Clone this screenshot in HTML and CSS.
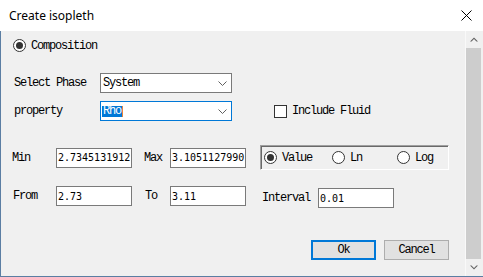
FILE: index.html
```html
<!DOCTYPE html>
<html lang="en">
<head>
    <meta charset="UTF-8">
    <meta name="viewport" content="width=device-width, initial-scale=1.0">
    <title>Create isopleth</title>
    <link rel="stylesheet" href="styles.css">
</head>
<body>
<div class="window">
    <div class="titlebar">
        <span class="title">Create isopleth</span>
        <svg class="close" width="11" height="11" viewBox="0 0 11 11">
            <path d="M0.5 0.5L10.5 10.5M10.5 0.5L0.5 10.5" stroke="#000" stroke-width="1" fill="none"/>
        </svg>
    </div>

    <div class="frame">
        <div class="client">
            <!-- Composition -->
            <div class="row row-comp">
                <span class="radio checked"></span>
                <span class="opt-label">Composition</span>
            </div>

            <!-- Fase -->
            <div class="row row-phase">
                <span class="label-col">Select Phase</span>
                <div class="combo">
                    <span>System</span>
                    <svg class="chevron" width="9" height="5" viewBox="0 0 9 5">
                        <path d="M0.5 0.5L4.5 4.5L8.5 0.5" stroke="#606060" fill="none"/>
                    </svg>
                </div>
            </div>

            <!-- Propriedade -->
            <div class="row row-prop">
                <span class="label-col">property</span>
                <div class="combo focused">
                    <span class="selected-text">Rho</span>
                    <svg class="chevron" width="9" height="5" viewBox="0 0 9 5">
                        <path d="M0.5 0.5L4.5 4.5L8.5 0.5" stroke="#606060" fill="none"/>
                    </svg>
                </div>
                <span class="checkbox"></span>
                <span class="opt-label">Include Fluid</span>
            </div>

            <!-- Min / Max -->
            <div class="row row-min">
                <span class="lbl-a">Min</span>
                <input class="field" type="text" value="2.7345131912">
                <span class="lbl-b">Max</span>
                <input class="field" type="text" value="3.1051127990">
                <div class="scale-group">
                    <div class="opt opt-value">
                        <span class="radio checked"></span>
                        <span class="opt-label">Value</span>
                    </div>
                    <div class="opt opt-ln">
                        <span class="radio"></span>
                        <span class="opt-label">Ln</span>
                    </div>
                    <div class="opt">
                        <span class="radio"></span>
                        <span class="opt-label">Log</span>
                    </div>
                </div>
            </div>

            <!-- From / To / Interval -->
            <div class="row row-from">
                <span class="lbl-a lbl-from">From</span>
                <input class="field" type="text" value="2.73">
                <span class="lbl-b lbl-to">To</span>
                <input class="field" type="text" value="3.11">
                <div class="interval">
                    <span class="lbl-interval">Interval</span>
                    <input class="field" type="text" value="0.01">
                </div>
            </div>

            <div class="actions">
                <button class="btn btn-ok">Ok</button>
                <button class="btn">Cancel</button>
            </div>
        </div>

        <div class="scrollbar">
            <div class="sb-btn">
                <svg width="8" height="5" viewBox="0 0 8 5">
                    <path d="M0 4.5L4 0.5L8 4.5L6.5 4.5L4 2L1.5 4.5Z" fill="#606060"/>
                </svg>
            </div>
            <div class="sb-thumb"></div>
            <div class="sb-btn">
                <svg width="8" height="5" viewBox="0 0 8 5">
                    <path d="M0 0.5L4 4.5L8 0.5L6.5 0.5L4 3L1.5 0.5Z" fill="#606060"/>
                </svg>
            </div>
        </div>
    </div>
</div>
</body>
</html>
```

FILE: styles.css
```css
body {
    margin: 0;
    background-color: #fff;
    font-family: 'Liberation Mono', 'DejaVu Sans Mono', monospace;
    font-size: 12px;
    letter-spacing: -1.2px;
    color: #000;
}
.window {
    width: 483px;
    height: 277px;
    display: flex;
    flex-direction: column;
    overflow: hidden;
}
.titlebar {
    height: 31px;
    flex: none;
    display: flex;
    align-items: center;
    justify-content: space-between;
    padding: 0 11px 0 9px;
    box-sizing: border-box;
    background-color: #fff;
}
.title {
    font-family: 'Noto Sans', sans-serif;
    font-size: 12px;
    letter-spacing: 0;
}
.close {
    display: block;
}
.frame {
    flex: 1;
    display: flex;
    border-bottom: 1px solid #5b7ea3;
}
.client {
    flex: 1;
    background-color: #f0f0f0;
    border-left: 1px solid #5b7ea3;
    padding-top: 8px;
}
.row {
    display: flex;
    align-items: center;
}
.row-comp {
    height: 13px;
    padding-left: 12px;
}
.row-phase {
    margin-top: 21px;
    padding-left: 13px;
}
.row-prop {
    margin-top: 8px;
    padding-left: 13px;
}
.label-col {
    width: 86px;
}
.combo {
    width: 132px;
    height: 20px;
    box-sizing: border-box;
    border: 1px solid #7a7a7a;
    background-color: #fff;
    display: flex;
    align-items: center;
    justify-content: space-between;
    padding: 0 4px 0 2px;
}
.combo.focused {
    border-color: #0078d7;
    padding-left: 1px;
}
.selected-text {
    background-color: #0078d7;
    color: #fff;
    line-height: 11px;
    height: 11px;
    padding: 0 1px 0 1px;
    border-right: 1px solid #e8833a;
}
.chevron {
    display: block;
}
.row-prop .checkbox {
    margin-left: 42px;
}
.checkbox {
    width: 13px;
    height: 13px;
    box-sizing: border-box;
    border: 1px solid #333;
    background-color: #fff;
    flex: none;
}
.radio {
    width: 13px;
    height: 13px;
    box-sizing: border-box;
    border: 1px solid #333;
    border-radius: 50%;
    background-color: #fff;
    flex: none;
    display: flex;
    align-items: center;
    justify-content: center;
}
.radio.checked::after {
    content: '';
    width: 7px;
    height: 7px;
    border-radius: 50%;
    background-color: #333;
}
.opt-label {
    margin-left: 5px;
}
.row-min {
    margin-top: 24px;
    height: 25px;
    padding-left: 11px;
}
.lbl-a {
    width: 44px;
}
.lbl-from {
    width: 43px;
    margin-left: 1px;
}
.lbl-b {
    width: 38px;
    padding-left: 12px;
    box-sizing: border-box;
}
.lbl-to {
    padding-left: 13px;
}
.field {
    width: 76px;
    height: 20px;
    box-sizing: border-box;
    border: 1px solid #7a7a7a;
    background-color: #fff;
    padding: 0 0 0 1px;
    margin: 0;
    font-family: 'DejaVu Sans Mono', monospace;
    font-size: 10px;
    letter-spacing: 0;
    color: #000;
    outline: none;
}
.scale-group {
    margin-left: 14px;
    width: 189px;
    height: 25px;
    box-sizing: border-box;
    border-top: 1px solid #a0a0a0;
    border-left: 1px solid #a0a0a0;
    border-bottom: 1px solid #fff;
    border-right: 1px solid #fff;
    box-shadow: inset 1px 1px 0 #696969;
    display: flex;
    align-items: center;
    padding-left: 3px;
}
.opt {
    display: flex;
    align-items: center;
}
.opt-value {
    width: 68px;
}
.opt-ln {
    width: 65px;
}
.row-from {
    margin-top: 16px;
    padding-left: 11px;
    align-items: flex-start;
}
.row-from > span {
    height: 20px;
    display: flex;
    align-items: center;
}
.interval {
    display: flex;
    align-items: center;
    margin-left: 16px;
    margin-top: 2px;
}
.lbl-interval {
    width: 56px;
}
.actions {
    display: flex;
    justify-content: flex-end;
    gap: 8px;
    margin-top: 32px;
    padding-right: 16px;
}
.btn {
    width: 65px;
    height: 20px;
    box-sizing: border-box;
    border: 1px solid #adadad;
    background-color: #e1e1e1;
    font-family: 'Liberation Mono', monospace;
    font-size: 12px;
    letter-spacing: -1.2px;
    color: #000;
    padding: 0;
}
.btn-ok {
    border: 2px solid #0078d7;
}
.scrollbar {
    width: 18px;
    flex: none;
    display: flex;
    flex-direction: column;
    box-sizing: border-box;
    border-left: 1px solid #f9f9f9;
    padding-right: 2px;
    background-color: #f0f0f0;
}
.sb-btn {
    height: 17px;
    display: flex;
    align-items: center;
    justify-content: center;
}
.sb-thumb {
    flex: 1;
    background-color: #cdcdcd;
}
```
